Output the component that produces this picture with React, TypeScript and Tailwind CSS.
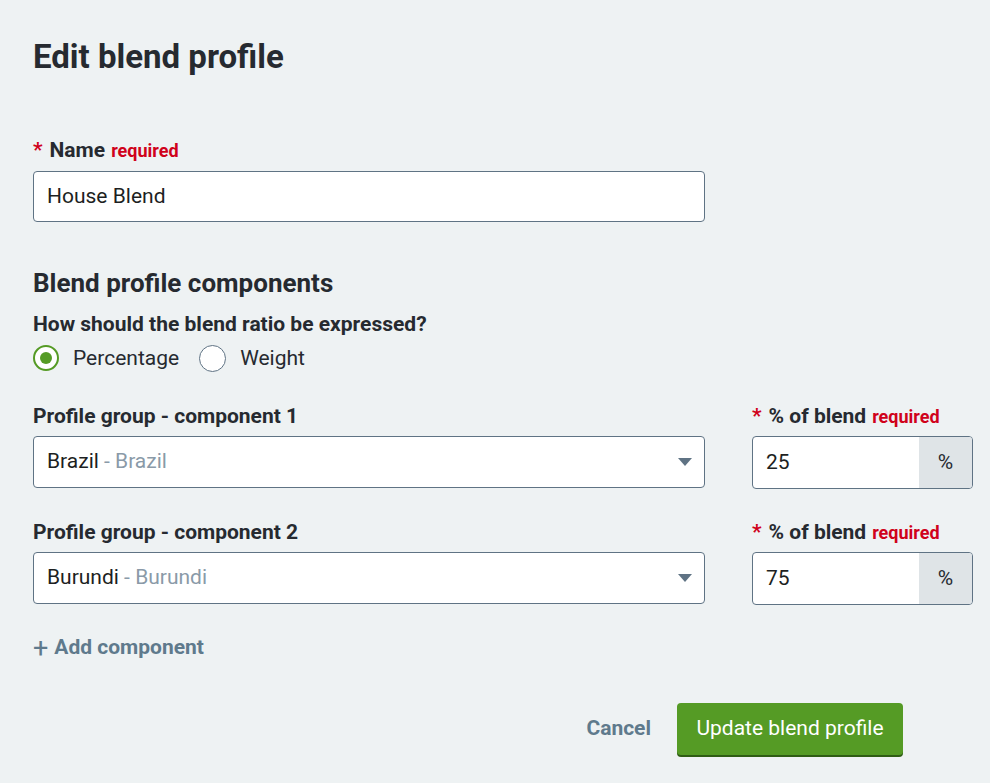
import React from "react";

function Caret() {
  return (
    <svg width="14" height="8" viewBox="0 0 14 8" className="shrink-0">
      <path d="M0 0 L14 0 L7 8 Z" fill="#5f7384" />
    </svg>
  );
}

function Req() {
  return <span className="text-[18px] font-bold text-[#d0021b] ml-[6px]">required</span>;
}

function Star() {
  return <span className="text-[#d0021b] mr-[7px]">*</span>;
}

function Row({ n, name, value }: { n: number; name: string; value: string }) {
  return (
    <div className="flex gap-[47px]">
      <div className="flex flex-col w-[672px]">
        <div className="h-[20px] leading-[20px] text-[21px] font-bold text-[#262a30] whitespace-nowrap">
          Profile group - component {n}
        </div>
        <div className="mt-[10px] h-[52px] flex items-center justify-between bg-white border border-[#5f7384] rounded-[4px] pl-[13px] pr-[12px] text-[21px]">
          <span>
            <span className="text-[#1d1f22]">{name}</span>
            <span className="text-[#8a9aa8]"> - {name}</span>
          </span>
          <Caret />
        </div>
      </div>
      <div className="flex flex-col w-[221px]">
        <div className="h-[20px] leading-[20px] flex items-baseline text-[21px] font-bold text-[#262a30] whitespace-nowrap">
          <Star />% of blend<Req />
        </div>
        <div className="mt-[10px] h-[53px] flex bg-white border border-[#5f7384] rounded-[4px] overflow-hidden text-[21px]">
          <div className="flex-1 flex items-center pl-[13px] text-[#1d1f22]">{value}</div>
          <div className="w-[53px] flex items-center justify-center bg-[#dfe4e7] text-[#262a30]">%</div>
        </div>
      </div>
    </div>
  );
}

export default function App() {
  return (
    <div
      className="min-h-[783px] w-[990px] bg-[#eef2f3] pl-[33px] pr-[17px] pt-[37px] text-[#262a30]"
      style={{ fontFamily: "Roboto, 'Liberation Sans', sans-serif" }}
    >
      <h1 className="text-[33px] leading-[40px] font-bold text-[#262a30]">Edit blend profile</h1>

      <div className="mt-[61px] h-[24px] leading-[24px] flex items-baseline text-[21px] font-bold">
        <Star />Name<Req />
      </div>
      <div className="mt-[9px] w-[672px] h-[51px] flex items-center bg-white border border-[#5f7384] rounded-[4px] pl-[13px] text-[21px] text-[#1d1f22]">
        House Blend
      </div>

      <h2 className="mt-[46px] text-[26px] leading-[30px] font-bold">Blend profile components</h2>
      <div className="mt-[14px] text-[21px] leading-[24px] font-bold">How should the blend ratio be expressed?</div>
      <div className="mt-[8px] h-[28px] flex items-center text-[21px] leading-[28px] text-[#262a30]">
        <span className="w-[26px] h-[26px] rounded-full border-2 border-[#559b25] bg-white flex items-center justify-center">
          <span className="w-[12px] h-[12px] rounded-full bg-[#559b25]" />
        </span>
        <span className="ml-[14px]">Percentage</span>
        <span className="ml-[20px] w-[27px] h-[27px] rounded-full border border-[#5f7384] bg-white" />
        <span className="ml-[14px]">Weight</span>
      </div>

      <div className="mt-[34px] flex flex-col gap-[33px]">
        <Row n={1} name="Brazil" value="25" />
        <Row n={2} name="Burundi" value="75" />
      </div>

      <div className="mt-[29px] h-[28px] text-[21px] font-bold text-[#5f7a8c] flex items-center">
        <span className="text-[27px] font-normal leading-none mr-[6px]">+</span>Add component
      </div>

      <div className="mt-[41px] flex justify-end items-center pr-[70px] gap-[26px]">
        <span className="text-[21px] font-bold text-[#5f7a8c]">Cancel</span>
        <button className="h-[52px] w-[226px] rounded-[4px] bg-[#559b25] text-white text-[21px] shadow-[0_2px_0_#2f5d14]">
          Update blend profile
        </button>
      </div>
    </div>
  );
}
